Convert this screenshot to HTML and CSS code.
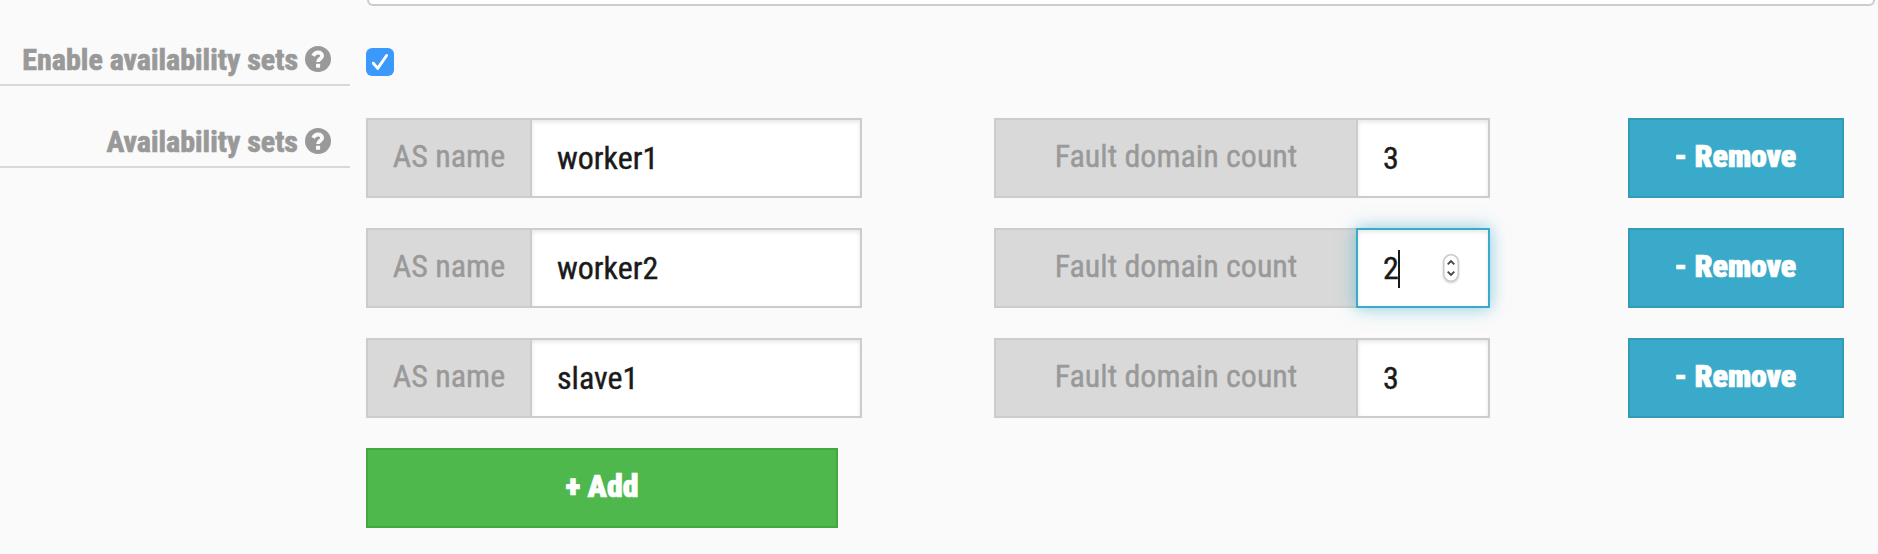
FILE: index.html
```html
<!DOCTYPE html>
<html lang="en">
<head>
<meta charset="utf-8">
<title>Availability sets</title>
<link rel="stylesheet" href="styles.css">
</head>
<body>
<svg class="defs" width="0" height="0" aria-hidden="true">
  <symbol id="help" viewBox="0 0 26 26">
    <circle cx="13" cy="13" r="13" fill="#999"/>
    <path d="M8.200 9.900C9.300 7.600 10.900 6.500 13 6.500c2.500 0 4.100 1.500 4.100 3.400 0 3-4.100 2.900-4.100 6" fill="none" stroke="#fafafa" stroke-width="3.900"/>
    <rect x="11" y="17.700" width="4.100" height="4" rx=".4" fill="#fafafa"/>
  </symbol>
</svg>
<div class="panel"></div>
<main class="form">
  <div class="labels">
    <div class="label"><span>Enable availability sets</span><svg class="help"><use href="#help"/></svg></div>
    <div class="label"><span>Availability sets</span><svg class="help"><use href="#help"/></svg></div>
  </div>
  <div class="controls">
    <div class="checkbox"><svg viewBox="0 0 28 28"><path d="M7.300 15.200l4.400 5.200L20.600 7.500" fill="none" stroke="#fff" stroke-width="2.900" stroke-linecap="round" stroke-linejoin="round"/></svg></div>
    <div class="row">
      <div class="group name"><span class="prefix">AS name</span><span class="input">worker1</span></div>
      <div class="group count"><span class="prefix">Fault domain count</span><span class="input">3</span></div>
      <div class="button remove">- Remove</div>
    </div>
    <div class="row">
      <div class="group name"><span class="prefix">AS name</span><span class="input">worker2</span></div>
      <div class="group count"><span class="prefix">Fault domain count</span><span class="input focused">2<i class="caret"></i><svg class="spinner" viewBox="0 0 16 28"><rect x=".75" y=".75" width="14.500" height="26.500" rx="7.250" fill="#fff" stroke="#ccc" stroke-width="1.500"/><path d="M4.700 10.300L8 7l3.300 3.300M4.700 17.700L8 21l3.300-3.300" fill="none" stroke="#444" stroke-width="1.800"/></svg></span></div>
      <div class="button remove">- Remove</div>
    </div>
    <div class="row">
      <div class="group name"><span class="prefix">AS name</span><span class="input">slave1</span></div>
      <div class="group count"><span class="prefix">Fault domain count</span><span class="input">3</span></div>
      <div class="button remove">- Remove</div>
    </div>
    <div class="button add">+ Add</div>
  </div>
</main>
</body>
</html>
```
FILE: styles.css
```css
* { box-sizing: border-box; }
body {
  margin: 0;
  height: 554px;
  overflow: hidden;
  background: #fafafa;
  font-family: "Roboto Condensed", Roboto, sans-serif;
  font-stretch: 75%;
  font-size: 32px;
  -webkit-text-stroke: .4px currentColor;
  color: #1a1a1a;
}
.defs { display: block; }
.panel {
  height: 6px;
  margin: 0 3px 0 367px;
  background: #fff;
  border: 2px solid #ccc;
  border-top: 0;
  border-radius: 0 0 8px 8px;
}
.form { display: flex; gap: 16px; }
.labels { width: 350px; }
.label {
  display: flex;
  justify-content: flex-end;
  align-items: flex-start;
  gap: 7px;
  height: 80px;
  padding: 36px 19px 0 0;
  border-bottom: 2px solid #d9d9d9;
  color: #999;
  font-size: 30px;
  font-weight: 700;
  line-height: 36px;
  -webkit-text-stroke-width: .7px;
}
.label + .label { height: 82px; padding-top: 38px; }
.help { width: 26px; height: 26px; margin-top: 4px; -webkit-text-stroke: 0; }
.checkbox {
  width: 28px;
  height: 28px;
  margin: 42px 0;
  border-radius: 6px;
  background: #3b99fc;
}
.checkbox svg { display: block; }
.row { display: flex; margin-bottom: 30px; }
.group { display: flex; height: 80px; border: 2px solid #ccc; background: #fff; }
.name { width: 496px; margin-right: 132px; }
.count { width: 496px; margin-right: 138px; }
.prefix {
  width: 164px;
  border-right: 2px solid #ccc;
  background: #d9d9d9;
  color: #999;
  text-align: center;
  line-height: 73px;
}
.count .prefix { width: 362px; }
.input {
  flex: 1;
  display: flex;
  padding-left: 25px;
  line-height: 77px;
  box-shadow: inset 0 2px 4px rgba(0, 0, 0, .1);
}
.focused {
  position: relative;
  margin: -2px;
  border: 2px solid #39aac9;
  background: #fff;
  box-shadow: inset 0 2px 4px rgba(0, 0, 0, .1), 0 0 16px rgba(57, 170, 201, .6);
}
.caret { width: 2px; height: 38px; margin: 20px 0 0 -1px; background: #1a1a1a; }
.spinner { width: 16px; height: 28px; margin: 24px 0 0 43px; filter: drop-shadow(0 1px 1px rgba(0, 0, 0, .2)); }
.button {
  height: 80px;
  color: #fff;
  font-weight: 900;
  text-align: center;
  line-height: 73px;
  -webkit-text-stroke-width: .7px;
}
.remove { width: 216px; padding-right: 2px; letter-spacing: -.2px; background: #39aac9; border: 2px solid #319bb8; }
.add { width: 472px; background: #4eb84c; border: 2px solid #43a842; }
```
